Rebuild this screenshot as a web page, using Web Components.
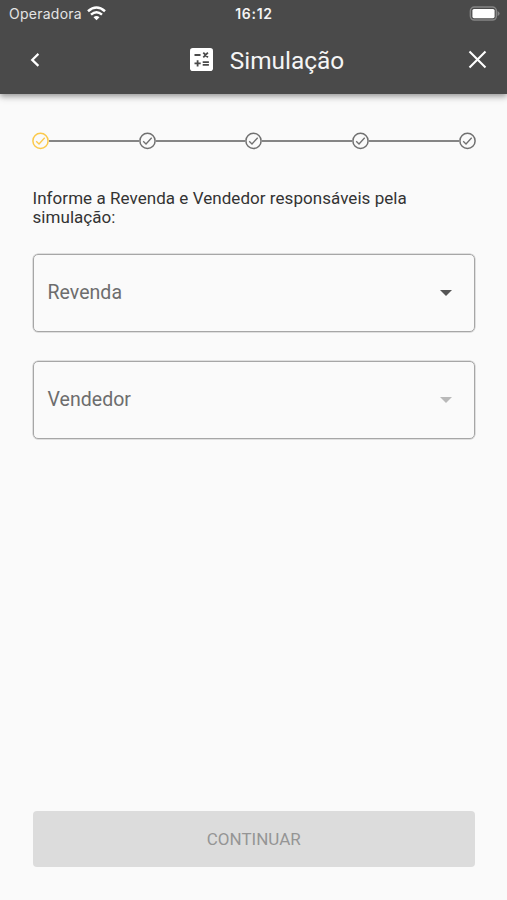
<!DOCTYPE html>
<html lang="pt-BR">
<head>
<meta charset="utf-8">
<title>Simulação</title>
<style>
html,body{margin:0;height:100%}
body{background:#fafafa;font-family:Roboto,"Liberation Sans",sans-serif}
</style>
</head>
<body>
<simulation-page></simulation-page>
<script>
const define = (name, html) => customElements.define(name, class extends HTMLElement {
  constructor() {
    super();
    this.attachShadow({mode: 'open'}).innerHTML = html;
  }
});

define('status-bar', `
<style>
:host{display:grid;grid-template-columns:1fr auto 1fr;align-items:center;height:28px;padding:0 7px 0 9px;box-sizing:border-box;font:14px/28px Inter,sans-serif;color:#fff}
.left{display:flex;align-items:center;gap:5.5px;color:#e4e4e4}
.carrier{letter-spacing:.25px}
.time{font-weight:600;font-size:14px;letter-spacing:.7px;margin-left:-1px;color:#f4f4f4}
.battery{justify-self:end}
svg{display:block;margin-top:-2px}
</style>
<div class="left"><span class="carrier">Operadora</span>
<svg width="19" height="15" viewBox="0 0 19 15" fill="none" stroke="#fff" stroke-width="2.5"><path d="M1 5.3Q9.5-2.2 18 5.3M4 8.6Q9.5 3.8 15 8.6"/><path d="M9.5 14.2 6.5 11.2Q9.5 8.7 12.5 11.2Z" fill="#fff" stroke="none"/></svg></div>
<span class="time">16:12</span>
<svg class="battery" width="31" height="15" viewBox="0 0 31 15"><rect x="1.4" y="1.1" width="26" height="13" rx="4" fill="none" stroke="#858585" stroke-width="1.5"/><rect x="3.4" y="3" width="22.2" height="9.2" rx="1.6" fill="#fff"/><path d="M28.6 5v5q2-1 2-2.5T28.6 5Z" fill="#858585"/></svg>`);

define('nav-bar', `
<style>
:host{display:grid;grid-template-columns:1fr auto 1fr;align-items:center;height:65px;padding:0 19px 0 25px;color:#fff}
h1{display:flex;align-items:center;gap:17px;margin:0 0 0 21px;font-weight:400;font-size:24.4px;line-height:32px;color:#f5f5f5}
svg{display:block}
.close{justify-self:end}
svg{margin-top:-2px}
</style>
<svg width="20" height="20" viewBox="0 0 20 20" fill="none" stroke="#fff" stroke-width="2.2"><path d="m13.4 3.9-6.2 6 6.2 6"/></svg>
<h1><svg width="23" height="23" viewBox="0 0 23 23"><rect width="23" height="23" rx="2.8" fill="#fff"/><path d="M4.5 7h6M13.3 4.7l4.6 4.6M17.9 4.7l-4.6 4.6M4.5 15.3h6.2M7.6 12.2v6.2M12.7 14.1h6.2M12.7 16.9h6.2" stroke="#4a4a4a" stroke-width="1.8"/></svg><slot></slot></h1>
<svg class="close" width="21" height="21" viewBox="0 0 21 21" fill="none" stroke="#fff" stroke-width="2.1"><path d="m2.5 2.5 16 16m0-16-16 16"/></svg>`);

define('app-header', `
<style>
:host{display:block;position:relative;background:#4a4a4a;height:93.5px;box-shadow:0 2px 5px rgba(0,0,0,.28),0 4px 7px rgba(0,0,0,.14)}
</style><slot></slot>`);

define('step-mark', `
<style>
:host{display:block;flex:none;width:17px;height:17px;color:#707070}
:host([active]){color:#fbc94b}
svg{display:block;overflow:visible}
</style>
<svg width="17" height="17" viewBox="0 0 17 17" fill="none" stroke="currentColor"><g transform="translate(0 .4)"><circle cx="8.5" cy="8.5" r="7.6" stroke-width="1.5"/><path d="m4.2 8.8 2.8 2.8 5.7-6.3" stroke-width="1.3"/></g></svg>`);

define('step-track', `
<style>
:host{display:flex;align-items:center;height:17px}
i{flex:1;height:2px;background:#858585}
</style>
<step-mark active></step-mark><i></i><step-mark></step-mark><i></i><step-mark></step-mark><i></i><step-mark></step-mark><i></i><step-mark></step-mark>`);

define('select-field', `
<style>
:host{display:flex;align-items:center;justify-content:space-between;box-sizing:border-box;height:78px;padding:0 22px 1px 14px;border:1px solid #a6a6a6;box-shadow:0 0 0 .5px #c4c4c4;border-radius:5px;font-size:19.5px;letter-spacing:.04px;color:#6d6d6d;--arrow:#555}
:host([disabled]){--arrow:#b9b9b9}
svg{display:block;fill:var(--arrow);margin-top:1px}
</style>
<span><slot></slot></span><svg width="12" height="6" viewBox="0 0 12 6"><path d="M0 0h12L6 6Z"/></svg>`);

define('action-button', `
<style>
:host{display:block}
button{display:block;width:100%;height:56px;padding:0;border:0;border-radius:4px;background:#dcdcdc;color:#959595;font:400 17px/56px Roboto,sans-serif;text-align:center}
</style><button disabled><slot></slot></button>`);

define('simulation-page', `
<style>
:host{display:flex;flex-direction:column;height:100vh;min-height:900px;background:#fafafa}
main{flex:1;display:flex;flex-direction:column;padding:39px 32px 33px 32.5px}
step-track{margin:-.5px -.5px 0 -.5px}
p{margin:39.8px 0 26px;font-size:17px;letter-spacing:.05px;line-height:19.6px;color:#333}
select-field+select-field{margin-top:29.4px}
action-button{margin-top:auto}
</style>
<app-header><status-bar></status-bar><nav-bar>Simulação</nav-bar></app-header>
<main>
<step-track></step-track>
<p>Informe a Revenda e Vendedor responsáveis pela<br>simulação:</p>
<select-field>Revenda</select-field>
<select-field disabled>Vendedor</select-field>
<action-button>CONTINUAR</action-button>
</main>`);
</script>
</body>
</html>
